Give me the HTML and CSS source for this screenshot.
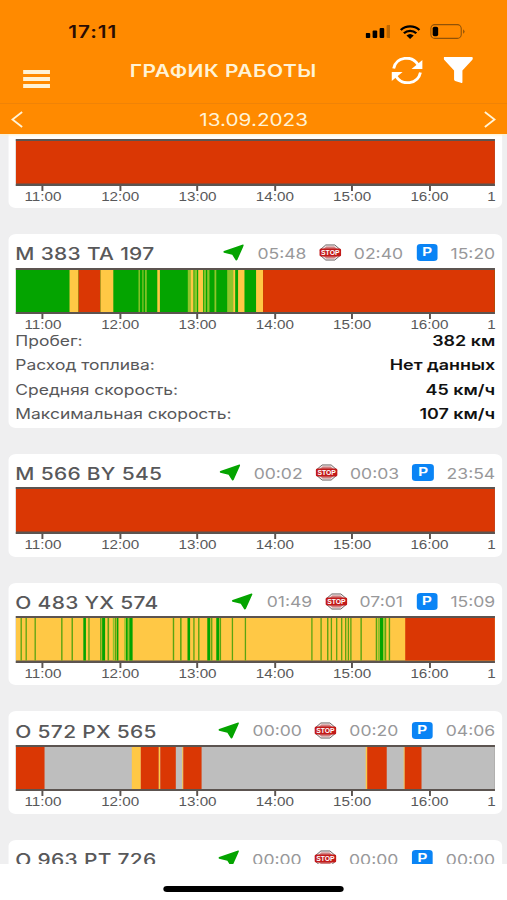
FILE: index.html
```
<!DOCTYPE html>
<html lang="ru">
<head>
    <meta charset="UTF-8">
    <meta name="viewport" content="width=device-width, initial-scale=1.0">
    <title>График работы</title>
    <link rel="stylesheet" href="styles.css">
</head>
<body>
    <div class="screen">
        <header class="header">
            <div class="status-bar">
                <span class="clock">17:11</span>
                <div class="status-icons">
                    <svg class="signal" viewBox="0 0 25 13" preserveAspectRatio="none">
                        <rect x="0" y="8" width="4.6" height="5" rx="1"/>
                        <rect x="7" y="5.5" width="4.6" height="7.5" rx="1"/>
                        <rect x="14" y="3" width="4.6" height="10" rx="1"/>
                        <rect x="21" y="0" width="4" height="13" rx="1" opacity=".25"/>
                    </svg>
                    <svg class="wifi" viewBox="0 0 20 14" preserveAspectRatio="none">
                        <path d="M1 5a13 13 0 0 1 18 0M4 8.300a8.600 8.600 0 0 1 12 0" fill="none" stroke="#000" stroke-width="2.300"/>
                        <path d="M6.500 10.500a5.200 5.200 0 0 1 7 0L10 14z"/>
                    </svg>
                    <svg class="battery" viewBox="0 0 36 15" preserveAspectRatio="none">
                        <rect x=".6" y=".6" width="31" height="13.800" rx="4" fill="none" stroke="#8f5208" stroke-width="1.100"/>
                        <rect x="2.500" y="2.800" width="5.600" height="9.400" rx="1.800"/>
                        <path d="M33.500 5.200q3 2.300 0 4.600z" fill="#8f5208"/>
                    </svg>
                </div>
            </div>
            <div class="toolbar">
                <div class="menu-btn"><i></i><i></i><i></i></div>
                <h1>ГРАФИК РАБОТЫ</h1>
                <svg class="refresh" viewBox="0 0 32 27" preserveAspectRatio="none">
                    <path d="M2.500 11.500C5 -.5 21-2 27 7.500M29.500 15.500C27 27.500 11 29 5 19.500" fill="none" stroke="#fff" stroke-width="2.900"/>
                    <path d="M31.500 3v9H20.500zM.5 24v-9h11z" fill="#fff"/>
                </svg>
                <svg class="filter" viewBox="0 0 28 26" preserveAspectRatio="none">
                    <path d="M.5 0h27q1 1.500 0 2.700L18 13.500V25q0 1.500-1.500.8L11 24q-1-.6-1-1.500v-9L.5 2.700Q-.5 1.200.5 0z" fill="#fff"/>
                </svg>
            </div>
            <div class="date-bar">
                <svg class="chevron" viewBox="0 0 12 17" preserveAspectRatio="none"><path d="M11 1L1.500 8.500 11 16"/></svg>
                <span class="date">13.09.2023</span>
                <svg class="chevron" viewBox="0 0 12 17" preserveAspectRatio="none"><path d="M1 1l9.500 7.500L1 16"/></svg>
            </div>
        </header>
        <main class="list" id="vehicleList"></main>
        <footer class="footer"><div class="home-indicator"></div></footer>
    </div>

    <script>
        const colors = { g: '#04a400', y: '#ffc845', r: '#da3704', l: '#8fc52a', d: '#5aa510', n: '#bebebe' };

        // Every segment is [color, start, width], the whole chart is 480 units wide
        const vehicles = [
            { base: 'r', segments: [] },
            {
                plate: 'M 383 TA 197', times: ['05:48', '02:40', '15:20'], base: 'g',
                segments: [
                    ['y', 53.7, 9], ['r', 62.7, 22], ['y', 84.7, 12.8],
                    ['l', 122.7, 1.4], ['l', 126.5, 1.2], ['l', 129.3, 1.6], ['y', 141.5, 2.6],
                    ['l', 172, 2.7], ['y', 174.7, 3], ['l', 178.5, 2.8], ['y', 182.4, 5],
                    ['l', 188.3, 1.8], ['l', 191.4, 2.3], ['l', 198.7, 1.8],
                    ['l', 211.4, 6], ['y', 217.4, 2], ['y', 222.3, 6.4],
                    ['y', 240.3, 7], ['r', 247.3, 232.7]
                ],
                stats: [
                    ['Пробег:', '382 км'],
                    ['Расход топлива:', 'Нет данных'],
                    ['Средняя скорость:', '45 км/ч'],
                    ['Максимальная скорость:', '107 км/ч']
                ]
            },
            { plate: 'M 566 BY 545', times: ['00:02', '00:03', '23:54'], base: 'r', segments: [] },
            {
                plate: 'O 483 YX 574', times: ['01:49', '07:01', '15:09'], base: 'y',
                segments: [
                    ['d', 4.7, 1.3], ['d', 9.7, 1.3], ['d', 18.7, 1.3], ['d', 45.3, 1.4], ['d', 55.7, 1.4],
                    ['g', 67.5, 2.6], ['d', 72.5, 1.3], ['d', 84.3, 1.4], ['g', 86.3, 3], ['d', 91.7, 1.6],
                    ['l', 97, 1.5], ['d', 99, 1.5], ['g', 101, 1.6], ['l', 108.5, 1.5], ['g', 110.2, 1.8],
                    ['l', 112, 1.5], ['g', 113.5, 3.3], ['d', 157, 1.4], ['d', 164.3, 1.5], ['g', 171.7, 2.6],
                    ['d', 177.5, 1.3], ['d', 182.3, 1.4], ['g', 191.5, 3], ['d', 195.3, 1.3], ['g', 200.5, 3],
                    ['d', 204, 1.3], ['d', 216, 1.3], ['d', 229, 1.3],
                    ['d', 295.5, 1.3], ['d', 304.7, 1.3], ['d', 311.3, 1.4], ['d', 315, 1.3], ['d', 320.3, 1.3],
                    ['d', 325.3, 1.3], ['d', 329.3, 1.3], ['d', 332, 1.3], ['d', 334.5, 1.3], ['d', 344.7, 1.4],
                    ['d', 360, 1.4], ['l', 362, 1.5], ['g', 364, 3.5], ['l', 367.5, 1.8], ['d', 369.3, 1.2],
                    ['d', 373, 1.4], ['r', 389.5, 90.5]
                ]
            },
            {
                plate: 'O 572 PX 565', times: ['00:00', '00:20', '04:06'], base: 'n',
                segments: [
                    ['r', 0, 28.7], ['y', 116, 9], ['r', 125, 18], ['y', 143, 1.5], ['r', 144.5, 15.5],
                    ['y', 166.5, 1], ['r', 167.5, 18.3], ['y', 350, 1.5], ['r', 351.5, 19.5],
                    ['y', 388, 1], ['r', 389, 16.8]
                ]
            },
            { plate: 'O 963 PT 726', times: ['00:00', '00:00', '00:00'] }
        ];

        const hours = ['11:00', '12:00', '13:00', '14:00', '15:00', '16:00'];

        const arrowIcon = `
            <svg class="icon-arrow" viewBox="0 0 22 18" preserveAspectRatio="none">
                <path d="M1 7.500L20.500.5q1.400-.2.9 1L14.800 16.700q-.9 1.500-1.900.3L9.500 11.300 1 9.200Q-.4 8.300 1 7.500z" fill="#04a400"/>
            </svg>`;

        const stopIcon = `
            <svg class="icon-stop" viewBox="0 0 22 18" preserveAspectRatio="none">
                <path d="M6.500 1h9L20.500 5.500v7L15.500 17h-9L1.500 12.500v-7z" fill="#efe6e6" stroke="#6d6464" stroke-width="1"/>
                <path d="M7 2.700h8l3.500 3v6.600L15 15.300H7l-3.500-3V5.700z" fill="#cf8080"/>
                <rect x="0" y="4.700" width="22" height="8.600" rx="1.800" fill="#c21a1a"/>
                <text x="11" y="11.500" text-anchor="middle" textLength="18.500" lengthAdjust="spacingAndGlyphs">STOP</text>
            </svg>`;

        const parkingIcon = '<span class="icon-parking">P</span>';

        function head(vehicle) {
            return `
                <span class="plate">${vehicle.plate}</span>
                ${arrowIcon}<span class="time">${vehicle.times[0]}</span>
                ${stopIcon}<span class="time">${vehicle.times[1]}</span>
                ${parkingIcon}<span class="time">${vehicle.times[2]}</span>`;
        }

        function chart(vehicle) {
            const rects = vehicle.segments.map(([color, start, width]) =>
                `<rect x="${start}" y="0" width="${width}" height="42" fill="${colors[color]}"/>`).join('');
            return `
                <svg class="chart" viewBox="0 0 480 42" preserveAspectRatio="none">
                    <rect width="480" height="42" fill="${colors[vehicle.base]}"/>${rects}
                </svg>
                <div class="axis">
                    ${hours.map(hour => `<span class="hour">${hour}</span>`).join('')}
                    <span class="hour-cut">1</span>
                </div>`;
        }

        function stats(rows) {
            return rows.map(([label, value]) =>
                `<div class="stat"><span>${label}</span><b>${value}</b></div>`).join('');
        }

        document.getElementById('vehicleList').innerHTML = vehicles.map(vehicle => `
            <section class="card">
                <div class="card-head">${vehicle.plate ? head(vehicle) : ''}</div>
                ${vehicle.segments ? chart(vehicle) : ''}
                ${vehicle.stats ? stats(vehicle.stats) : ''}
            </section>`).join('');
    </script>
</body>
</html>
```
FILE: styles.css
```
* {
    box-sizing: border-box;
}
body {
    margin: 0;
    overflow: hidden;
    font-family: "Liberation Sans", Arial, sans-serif;
    color: #58585a;
}
.screen {
    width: 416px;
    height: 900px;
    display: flex;
    flex-direction: column;
    transform: scaleX(1.21875);
    transform-origin: 0 0;
    overflow: hidden;
    background: #efeff0;
}
.header {
    flex: none;
    height: 134px;
    background: #ff8a00;
    color: #fff3d6;
    z-index: 1;
    box-shadow: 0 1px 2px #fff0c8;
}
.status-bar {
    display: flex;
    justify-content: space-between;
    align-items: center;
    height: 47px;
    padding: 16px 34px 0 56px;
}
.clock {
    font: 600 17px Inter, sans-serif;
    letter-spacing: .8px;
    color: #2a0d04;
}
.status-icons {
    display: flex;
    align-items: center;
}
.signal {
    width: 20.5px;
    height: 13px;
}
.wifi {
    width: 17px;
    height: 14px;
    margin: 0 8px;
}
.battery {
    width: 29px;
    height: 15px;
}
.toolbar {
    display: flex;
    align-items: center;
    height: 57px;
    padding: 0 28.3px 10px 18.5px;
    border-bottom: 1px solid #f08306;
}
.menu-btn {
    display: flex;
    flex-direction: column;
    gap: 3px;
    margin-top: 17px;
}
.menu-btn i {
    width: 22.5px;
    height: 4px;
    background: #fff3d6;
}
h1 {
    flex: 1;
    margin: 1px 0 0 65.5px;
    font: 600 17.2px Inter, sans-serif;
    letter-spacing: .4px;
    white-space: nowrap;
}
.refresh {
    width: 26px;
    height: 27px;
}
.filter {
    width: 24px;
    height: 26px;
    margin-left: 17px;
}
.date-bar {
    display: flex;
    justify-content: space-between;
    align-items: center;
    height: 30px;
    padding: 1px 8.7px 0 9px;
}
.date {
    font: 400 17px Inter, sans-serif;
}
.chevron {
    width: 10px;
    height: 17px;
    fill: none;
    stroke: #fff3d6;
    stroke-width: 1.8;
}
.list {
    flex: 1;
    min-height: 0;
    overflow: hidden;
    display: flex;
    flex-direction: column;
    gap: 26px;
    padding: 0 4px 0 6.6px;
}
.card {
    flex: none;
    height: 102.7px;
    padding: 0 5.7px 0 6px;
    background: #fff;
    border-radius: 6px;
}
.card:first-child {
    margin-top: -28.5px;
}
.card:nth-child(2) {
    height: 193.7px;
}
.card-head {
    display: flex;
    align-items: center;
    height: 33.5px;
    padding-top: 4px;
}
.plate {
    flex: 1;
    padding-top: 2px;
    font: 500 17.2px Inter, sans-serif;
    letter-spacing: .25px;
    white-space: nowrap;
}
.time {
    padding-top: 1px;
    font: 400 14.4px Inter, sans-serif;
    color: #98989a;
}
.icon-arrow {
    width: 17.5px;
    height: 17px;
    margin-right: 11px;
}
.icon-stop {
    width: 18px;
    height: 17px;
    margin: 0 10.2px 0 10.7px;
}
.icon-stop text {
    font: bold 7px "Liberation Sans", sans-serif;
    fill: #fff;
}
.icon-parking {
    width: 17.3px;
    height: 17px;
    margin: 0 10.7px 0 11px;
    border-radius: 3px;
    background: #0a84f5;
    color: #fff;
    font: bold 12px/17px "Liberation Sans", sans-serif;
    text-align: center;
}
.chart {
    display: block;
    width: 100%;
    height: 46.5px;
    border: solid #5c5450;
    border-width: 2px 0;
    background: #5c5450;
}
.axis {
    display: flex;
    height: 15px;
    font-size: 12.5px;
    line-height: 13px;
    margin-right: -2px;
    padding-left: 6.6px;
}
.hour {
    width: 32px;
    margin-right: 31.45px;
    flex: none;
    text-align: center;
    background: linear-gradient(#5c5450, #5c5450) 50% 0 / 1.6px 5px no-repeat;
    padding-top: 5px;
}
.hour-cut {
    padding-top: 5px;
    flex: none;
}
.stat {
    display: flex;
    justify-content: space-between;
    height: 24.2px;
    line-height: 24.2px;
    font-family: Inter, sans-serif;
    font-size: 14.3px;
}
.stat b {
    font-size: 14.7px;
    font-weight: 600;
    color: #111;
}
.footer {
    flex: none;
    height: 36px;
    padding-top: 22px;
    background: #fff;
}
.home-indicator {
    width: 148px;
    height: 6px;
    margin: 0 auto;
    border-radius: 3px;
    background: #000;
}
```
